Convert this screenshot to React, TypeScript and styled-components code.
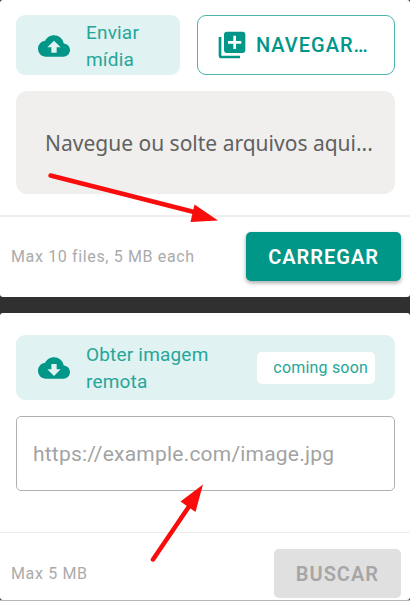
import React from "react";
import styled, { createGlobalStyle } from "styled-components";
import { MdCloudDownload, MdCloudUpload, MdLibraryAdd } from "react-icons/md";

const teal = "#009688";

const GlobalStyle = createGlobalStyle`
  *, *::before, *::after { box-sizing: border-box; }
  body {
    margin: 0;
    background: #303030;
    font-family: Roboto, "Liberation Sans", sans-serif;
  }
  button, input { font: inherit; }
`;

const Page = styled.main`
  display: flex;
  flex-direction: column;
  gap: 16px;
  border-bottom: 1px solid #b5b5b5;
`;

const Card = styled.section`
  position: relative;
  background: #fff;
  border-radius: 3px;
`;

const CardBody = styled.div<{ $top: number; $bottom: number }>`
  display: flex;
  flex-direction: column;
  gap: 16px;
  padding: ${(p) => p.$top}px 15px ${(p) => p.$bottom}px 16px;
`;

const HeaderRow = styled.div`
  display: grid;
  grid-template-columns: 164fr 198fr;
  gap: 17px;
`;

const Banner = styled.div<{ $padding: string }>`
  display: flex;
  align-items: center;
  gap: 16px;
  padding: ${(p) => p.$padding};
  border-radius: 9px;
  background: #e0f2f1;
  color: #26a69a;
  font-size: 19px;
  line-height: 27px;
  letter-spacing: 0.01em;

  svg {
    flex: none;
    width: 32px;
    height: 32px;
    color: ${teal};
  }
`;

const BannerLabel = styled.label`
  flex: 1;
`;

const Chip = styled.span`
  padding: 3px 7px 3px 16px;
  border-radius: 5px;
  background: #fff;
  font-size: 16px;
  line-height: 26px;
  white-space: nowrap;
`;

const Button = styled.button`
  display: flex;
  align-items: center;
  justify-content: center;
  border: 0;
  border-radius: 5px;
  font-size: 20px;
  font-weight: 500;
  letter-spacing: 1px;
  white-space: nowrap;
`;

const BrowseButton = styled(Button)`
  justify-content: flex-start;
  gap: 8px;
  padding: 0 18px;
  border: 1px solid #4db6ac;
  border-radius: 9px;
  background: #fff;
  color: ${teal};

  svg {
    flex: none;
    width: 32px;
    height: 32px;
  }
`;

const ActionButton = styled(Button)`
  height: 49px;
  padding: 0 22px;
  background: ${teal};
  color: #fff;
  font-weight: 600;
  box-shadow: 0 2px 4px rgba(0, 0, 0, 0.35);

  &:disabled {
    background: #e0e0e0;
    color: #a6a6a6;
    box-shadow: none;
  }
`;

const DropZone = styled.div`
  display: flex;
  align-items: center;
  height: 103px;
  padding: 0 29px;
  border-radius: 11px;
  background: #f0efee;
  color: #616161;
  font-family: "Noto Sans", "Open Sans", sans-serif;
  font-size: 21px;
  white-space: nowrap;
`;

const UrlInput = styled.input`
  width: 100%;
  height: 75px;
  padding: 0 16px;
  border: 1px solid #b0b0b0;
  border-radius: 5px;
  background: #fff;
  font-size: 21px;
  letter-spacing: 0.01em;

  &::placeholder {
    color: #a3a3a3;
    opacity: 1;
  }
`;

const Footer = styled.footer<{ $rule: number; $bottom: number }>`
  display: flex;
  align-items: center;
  justify-content: space-between;
  padding: ${(p) => (p.$rule === 2 ? 15 : 16)}px 9px ${(p) => p.$bottom}px 11px;
  border-top: ${(p) => p.$rule}px solid #eee;
`;

const Note = styled.span`
  color: #ababab;
  font-size: 16px;
  letter-spacing: 0.04em;
`;

const Arrow = styled.svg<{ $x: number; $y: number }>`
  position: absolute;
  left: ${(p) => p.$x}px;
  top: ${(p) => p.$y}px;
  overflow: visible;
  pointer-events: none;
  color: #f80c0c;
`;

export default function App() {
  return (
    <>
      <GlobalStyle />
      <Page>
        <Card>
          <CardBody $top={15} $bottom={21}>
            <HeaderRow>
              <Banner $padding="4px 20px 2px 22px">
                <MdCloudUpload aria-hidden="true" />
                <BannerLabel as="span">Enviar mídia</BannerLabel>
              </Banner>
              <BrowseButton type="button">
                <MdLibraryAdd aria-hidden="true" />
                NAVEGAR…
              </BrowseButton>
            </HeaderRow>
            <DropZone>Navegue ou solte arquivos aqui...</DropZone>
          </CardBody>
          <Footer $rule={2} $bottom={16}>
            <Note>Max 10 files, 5 MB each</Note>
            <ActionButton type="button">CARREGAR</ActionButton>
          </Footer>
          <Arrow $x={48} $y={172} width="170" height="52" viewBox="0 0 170 52" aria-hidden="true">
            <path d="M2.5 3.5 148 40.5" stroke="currentColor" strokeWidth="4.5" strokeLinecap="round" />
            <path d="M146.5 32.5 170 48.5 142.5 50Z" fill="currentColor" />
          </Arrow>
        </Card>
        <Card>
          <CardBody $top={22} $bottom={41}>
            <Banner $padding="6px 20px 5px 22px">
              <MdCloudDownload aria-hidden="true" />
              <BannerLabel htmlFor="remote-url">Obter imagem remota</BannerLabel>
              <Chip>coming soon</Chip>
            </Banner>
            <UrlInput id="remote-url" type="url" placeholder="https://example.com/image.jpg" />
          </CardBody>
          <Footer $rule={1} $bottom={2}>
            <Note>Max 5 MB</Note>
            <ActionButton type="button" disabled>BUSCAR</ActionButton>
          </Footer>
          <Arrow $x={150} $y={171} width="54" height="79" viewBox="0 0 54 79" aria-hidden="true">
            <path d="M3 75.5 40 21" stroke="currentColor" strokeWidth="4.5" strokeLinecap="round" />
            <path d="M53 .5 30.5 17.5 45.5 28Z" fill="currentColor" />
          </Arrow>
        </Card>
      </Page>
    </>
  );
}
